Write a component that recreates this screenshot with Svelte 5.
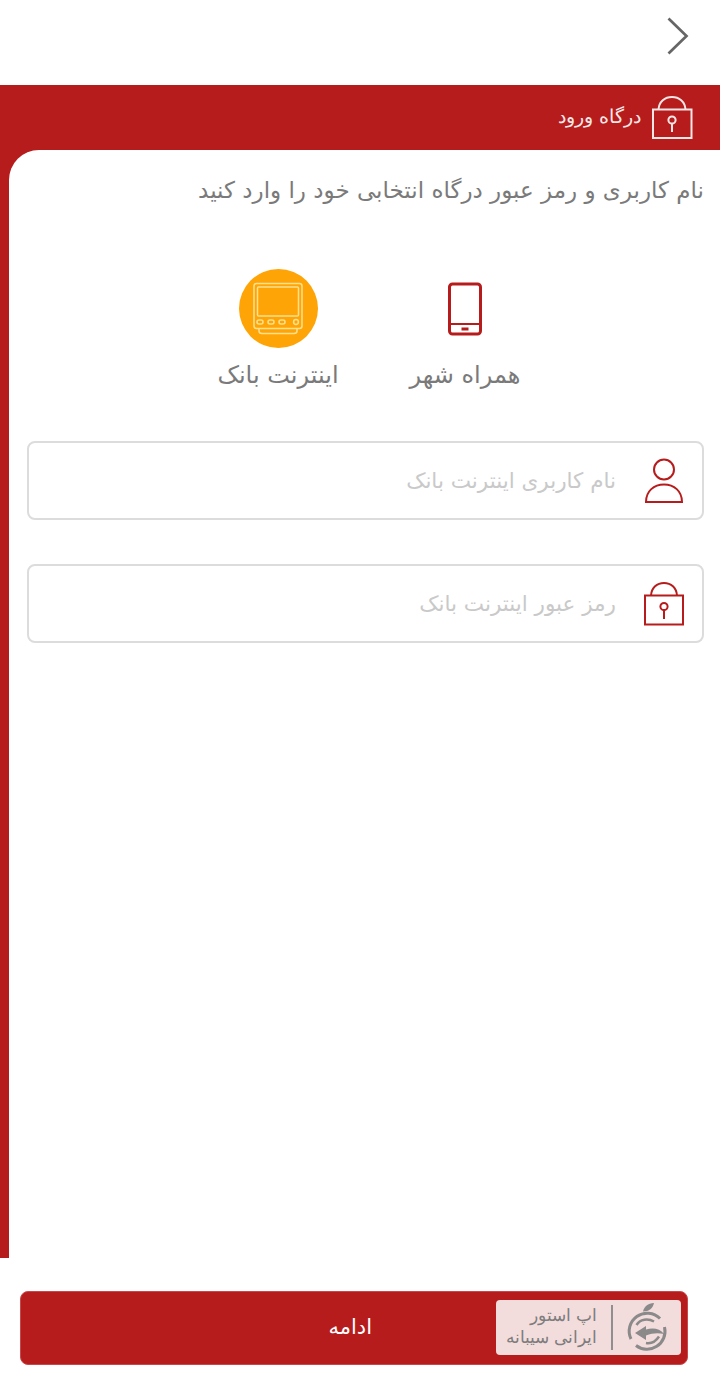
<script>
  let selected = $state("bank");
  let username = $state("");
  let password = $state("");
</script>

<div class="page" dir="rtl">
  <header class="topbar">
    <svg width="24" height="38" viewBox="0 0 24 38" aria-hidden="true">
      <path d="M2.500 1.500 L20.500 19 L2.500 36.500" fill="none" stroke="#666" stroke-width="2.700" />
    </svg>
  </header>

  <section class="panel">
    <div class="title">
      <svg width="42" height="46" viewBox="0 0 42 46" aria-hidden="true">
        <g fill="none" stroke="#f6e6e6" stroke-width="2">
          <rect x="2" y="14.500" width="38.500" height="28.500" />
          <path d="M7.500 14.500 C8 6.500 14 2 21 2 C28 2 34 6.500 34.500 14.500" />
          <circle cx="21" cy="25" r="3.600" />
          <path d="M21 28.600 V37" />
        </g>
      </svg>
      <span>درگاه ورود</span>
    </div>

    <div class="card">
      <p class="hint">نام کاربری و رمز عبور درگاه انتخابی خود را وارد کنید</p>

      <div class="options">
        <button class="option" onclick={() => (selected = "mobile")}>
          <span class="disc" class:on={selected === "mobile"}>
            <svg width="36" height="54" viewBox="0 0 36 54" aria-hidden="true">
              <rect x="2.500" y="2" width="31" height="50" rx="3" fill="none" stroke="#b71c1c" stroke-width="3" />
              <path d="M2.500 42 H33.500" stroke="#b71c1c" stroke-width="2" />
              <rect x="14.500" y="45.500" width="7" height="3" fill="#b71c1c" />
            </svg>
          </span>
          <span class="label">همراه شهر</span>
        </button>
        <button class="option" onclick={() => (selected = "bank")}>
          <span class="disc" class:on={selected === "bank"}>
            <svg width="52" height="54" viewBox="0 0 52 54" aria-hidden="true">
              <g fill="none" stroke="#ffe08e" stroke-width="1.500">
                <rect x="2" y="1.500" width="48" height="45" rx="2.500" />
                <rect x="5.500" y="5" width="41" height="29" rx="1" />
                <rect x="5" y="38" width="6" height="4" rx="2" />
                <rect x="16" y="38" width="6" height="4" rx="2" />
                <rect x="27" y="38" width="6" height="4" rx="2" />
                <circle cx="44" cy="40" r="2.400" />
                <path d="M7 46.500 V49 Q7 51.500 10 51.500 H42 Q45 51.500 45 49 V46.500" />
              </g>
            </svg>
          </span>
          <span class="label">اینترنت بانک</span>
        </button>
      </div>

      <div class="fields">
        <label class="field">
          <svg width="42" height="46" viewBox="0 0 42 46" aria-hidden="true">
            <g fill="none" stroke="#b71c1c" stroke-width="2">
              <circle cx="21" cy="11.500" r="10" />
              <path d="M3 44 C3 33 11 26.500 21 26.500 C31 26.500 39 33 39 44 Z" />
            </g>
          </svg>
          <input bind:value={username} placeholder="نام کاربری اینترنت بانک" />
        </label>
        <label class="field">
          <svg width="42" height="46" viewBox="0 0 42 46" aria-hidden="true">
            <g fill="none" stroke="#b71c1c" stroke-width="2">
              <rect x="2" y="14.500" width="38" height="29" />
              <path d="M8 14.500 C8.500 6.500 14 2 21 2 C28 2 33.500 6.500 34 14.500" />
              <circle cx="21" cy="25.500" r="3.600" />
              <path d="M21 29 V38" />
            </g>
          </svg>
          <input bind:value={password} type="text" placeholder="رمز عبور اینترنت بانک" />
        </label>
      </div>
    </div>
  </section>

  <footer class="footer">
    <button class="submit">
      <span class="store">
        <svg width="42" height="50" viewBox="0 0 42 50" aria-hidden="true">
          <path d="M17 9.500 C18 4.500 22 1.500 28 1 C27 6 23 9.500 17 9.500 Z" fill="#8a8a8a" />
          <g fill="none" stroke="#8a8a8a" stroke-width="3">
            <path d="M5 37 A18 18 0 0 1 34 16.500" />
            <path d="M38.500 25 A18 18 0 0 1 10 43.500" />
            <path d="M10.500 23 C14 17 22 16 28 19.500" stroke-width="2.500" />
            <path d="M20 41 C25 42 30 39 33 34.500" stroke-width="2.500" />
          </g>
          <path d="M9 31 L20 24 V27.500 C27 25.500 34 26.500 38 32 C32 30.500 26 31 20 33.500 V38 Z" fill="#8a8a8a" />
        </svg>
        <span class="sep"></span>
        <span class="store-text">اپ استور<br />ایرانی سیبانه</span>
      </span>
      <span class="go">ادامه</span>
    </button>
  </footer>
</div>

<style>
  :global(body) {
    background: #fff;
    font-family: "DejaVu Sans", "Noto Sans", sans-serif;
  }
  .page {
    width: 720px;
    height: 1395px;
    display: flex;
    flex-direction: column;
    overflow: hidden;
  }
  .topbar {
    height: 85px;
    flex: none;
    padding: 17px 30px 0 0;
    box-sizing: border-box;
  }
  .panel {
    height: 1173px;
    flex: none;
    background: #b71c1c;
    padding-left: 9px;
    display: flex;
    flex-direction: column;
    box-sizing: border-box;
  }
  .title {
    height: 65px;
    flex: none;
    display: flex;
    align-items: center;
    gap: 10px;
    padding-right: 27px;
    padding-bottom: 2px;
    box-sizing: border-box;
    color: #f8eaea;
    font-size: 18.500px;
    font-weight: 300;
  }
  .title svg {
    margin-top: 2px;
  }
  .card {
    flex: 1;
    background: #fff;
    border-top-left-radius: 30px;
    padding: 24px 16px 0 18px;
  }
  .hint {
    margin: 0;
    font-size: 23px;
    line-height: 32px;
    color: #7a7a7a;
  }
  .options {
    display: flex;
    justify-content: flex-start;
    gap: 57px;
    margin-top: 63px;
    padding-right: 174px;
  }
  .option {
    border: 0;
    background: none;
    padding: 0;
    font: inherit;
    display: flex;
    flex-direction: column;
    align-items: center;
    gap: 9px;
    width: 130px;
  }
  .disc {
    width: 79px;
    height: 79px;
    border-radius: 50%;
    display: flex;
    align-items: center;
    justify-content: center;
  }
  .disc.on {
    background: #ffa406;
  }
  .label {
    font-size: 24px;
    line-height: 36px;
    color: #7a7a7a;
    white-space: nowrap;
  }
  .fields {
    display: flex;
    flex-direction: column;
    gap: 44px;
    margin-top: 48px;
  }
  .field {
    height: 79px;
    box-sizing: border-box;
    border: 2px solid #dcdcdc;
    border-radius: 8px;
    display: flex;
    align-items: center;
    gap: 27px;
    padding-right: 17px;
  }
  .field input {
    flex: 1;
    min-width: 0;
    border: 0;
    outline: 0;
    padding: 0;
    background: none;
    font: inherit;
    font-size: 21.500px;
    color: #444;
  }
  .field input::placeholder {
    color: #c9c9c9;
    opacity: 1;
  }
  .footer {
    flex: 1;
    padding: 33px 32px 0 20px;
  }
  .submit {
    width: 100%;
    height: 74px;
    border: 1px solid #c9474a;
    border-radius: 8px;
    background: #b71c1c;
    color: #fff;
    font: inherit;
    font-size: 21px;
    display: flex;
    align-items: center;
    padding: 0 6px 2px 0;
  }
  .store {
    width: 185px;
    height: 55px;
    box-sizing: border-box;
    background: #f3dcdc;
    border-radius: 4px;
    display: flex;
    align-items: center;
    color: #7d7d7d;
    padding-right: 13px;
  }
  .sep {
    width: 2px;
    height: 45px;
    background: #8f8f8f;
    margin: 0 13px 0 14px;
  }
  .store-text {
    font-size: 16.500px;
    line-height: 22px;
    text-align: right;
    font-weight: 300;
  }
  .go {
    margin-right: 124px;
  }
</style>
